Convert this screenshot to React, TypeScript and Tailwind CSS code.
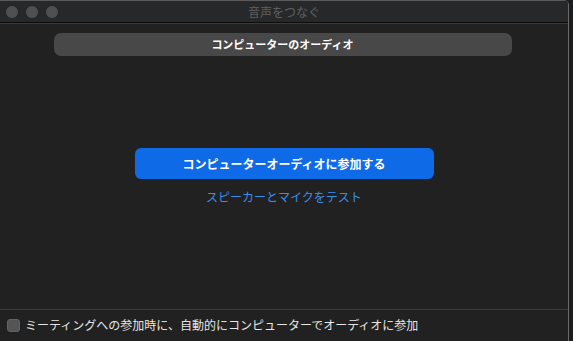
import React from 'react';

const jp = { fontFamily: '"Noto Sans CJK JP", "Noto Sans", sans-serif' };

export default function App() {
  return (
    <div className="w-[573px] h-[341px] bg-[#1c1c1c] flex overflow-hidden" style={jp}>
      <div className="w-[569px] h-full flex flex-col bg-[#212121] border-r border-[#6a6a6a] rounded-tr-[5px] overflow-hidden">
        {/* title bar */}
        <div className="h-[23px] shrink-0 bg-[#27282a] border-t border-[#5a5a5a] border-b border-b-[#0c0c0c] relative flex items-center">
          <div className="flex gap-[8px] pl-[6px]">
            <span className="w-[12px] h-[12px] rounded-full bg-[#4f5052]" />
            <span className="w-[12px] h-[12px] rounded-full bg-[#4f5052]" />
            <span className="w-[12px] h-[12px] rounded-full bg-[#4f5052]" />
          </div>
          <div className="absolute inset-0 flex items-center justify-center text-[12px] text-[#5f6062]">
            音声をつなぐ
          </div>
        </div>
        <div className="h-px bg-[#3a3a3a] shrink-0" />

        {/* body */}
        <div className="flex-1 flex flex-col items-center">
          <div className="mt-[9px] ml-[-3px] w-[458px] h-[23px] rounded-[7px] bg-[#484848] flex items-center justify-center text-[11px] font-bold text-white">
            コンピューターのオーディオ
          </div>
          <button className="mt-[92px] w-[299px] h-[31px] rounded-[6px] bg-[#0e6ae6] text-white text-[12px] font-bold">
            コンピューターオーディオに参加する
          </button>
          <div className="mt-[9px] text-[12px] text-[#3f8ee6]">スピーカーとマイクをテスト</div>
        </div>

        {/* footer */}
        <div className="h-[32px] shrink-0 border-t border-[#3a3a3a] flex items-center gap-[5px] pl-[7px] pb-[1px]">
          <span className="w-[13px] h-[13px] rounded-[3px] bg-[#555555] border border-[#626262]" />
          <span className="text-[12px] text-[#e6e6e6]">ミーティングへの参加時に、自動的にコンピューターでオーディオに参加</span>
        </div>
      </div>
    </div>
  );
}
